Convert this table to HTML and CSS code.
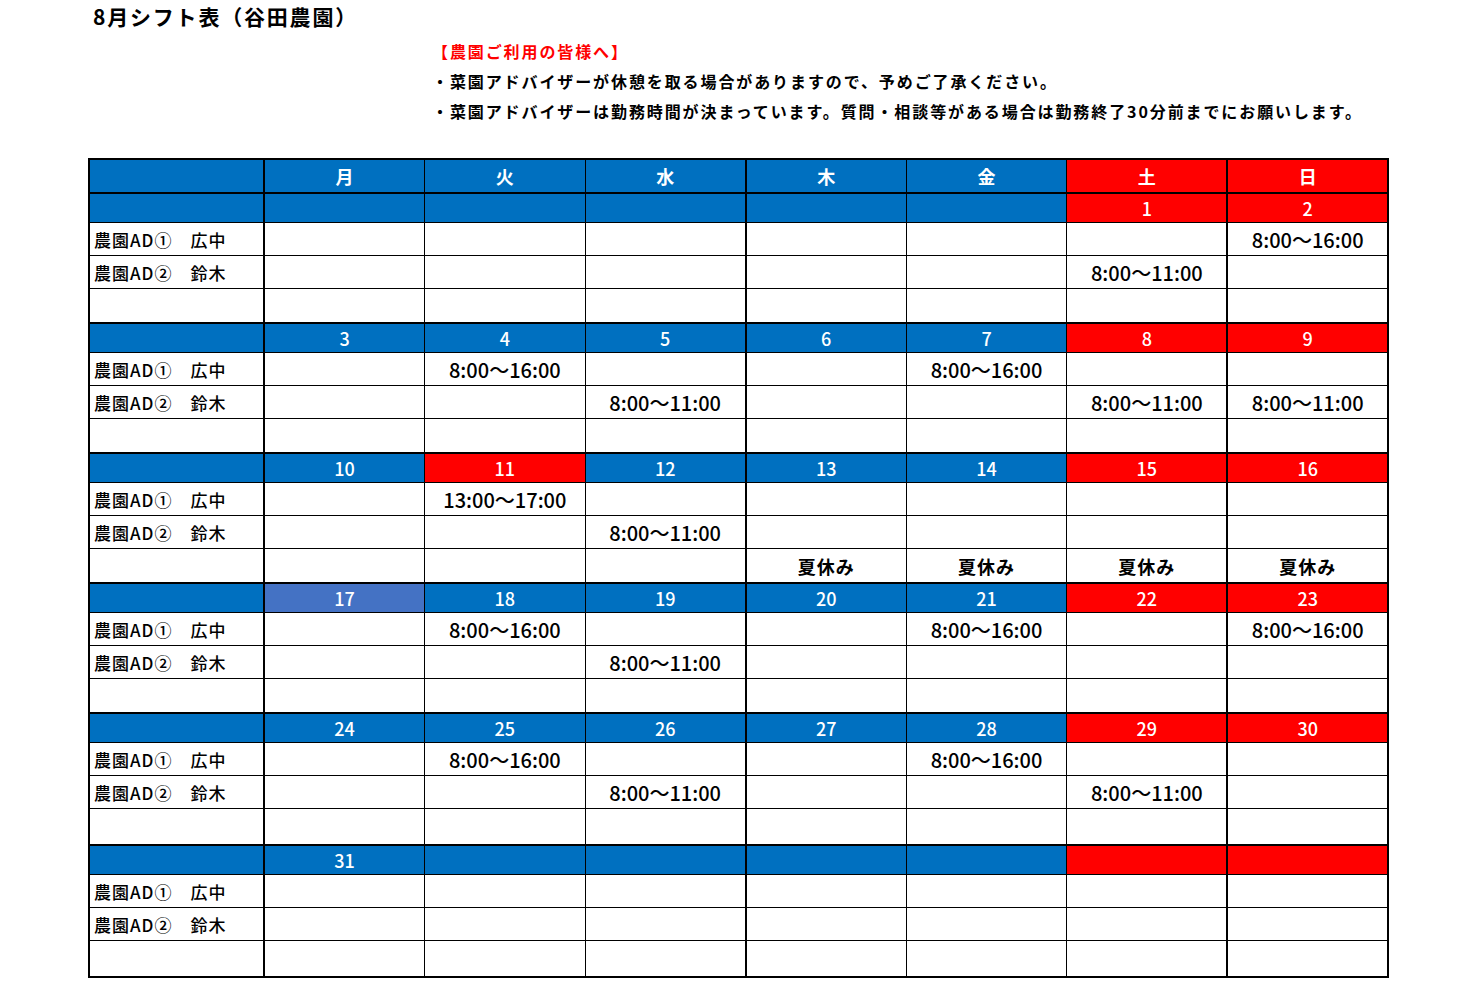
FILE: index.html
```html
<!DOCTYPE html>
<html lang="ja">
<head>
<meta charset="utf-8">
<title>8月シフト表（谷田農園）</title>
<link rel="stylesheet" href="styles.css">
</head>
<body>
<div class="page">
  <h1 class="title">8月シフト表（谷田農園）</h1>
  <div class="notice">
    <p class="notice-head">【農園ご利用の皆様へ】</p>
    <p class="notice-line">・菜園アドバイザーが休憩を取る場合がありますので、予めご了承ください。</p>
    <p class="notice-line">・菜園アドバイザーは勤務時間が決まっています。質問・相談等がある場合は勤務終了30分前までにお願いします。</p>
  </div>
  <table class="shift">
    <colgroup>
      <col class="c-label"><col><col><col><col><col><col><col>
    </colgroup>
    <tr class="wk">
      <td class="b"></td><td class="b">月</td><td class="b">火</td><td class="b">水</td><td class="b sep">木</td><td class="b">金</td><td class="r">土</td><td class="r sep">日</td>
    </tr>
    <tr class="dt">
      <td class="b"></td><td class="b"></td><td class="b"></td><td class="b"></td><td class="b sep"></td><td class="b"></td><td class="r">1</td><td class="r sep">2</td>
    </tr>
    <tr class="rw"><td class="lb">農園AD①　広中</td><td></td><td></td><td></td><td class="sep"></td><td></td><td></td><td class="sep">8:00～16:00</td></tr>
    <tr class="rw"><td class="lb">農園AD②　鈴木</td><td></td><td></td><td></td><td class="sep"></td><td></td><td>8:00～11:00</td><td class="sep"></td></tr>
    <tr class="rw last"><td class="lb"></td><td></td><td></td><td></td><td class="sep"></td><td></td><td></td><td class="sep"></td></tr>

    <tr class="dt">
      <td class="b"></td><td class="b">3</td><td class="b">4</td><td class="b">5</td><td class="b sep">6</td><td class="b">7</td><td class="r">8</td><td class="r sep">9</td>
    </tr>
    <tr class="rw"><td class="lb">農園AD①　広中</td><td></td><td>8:00～16:00</td><td></td><td class="sep"></td><td>8:00～16:00</td><td></td><td class="sep"></td></tr>
    <tr class="rw"><td class="lb">農園AD②　鈴木</td><td></td><td></td><td>8:00～11:00</td><td class="sep"></td><td></td><td>8:00～11:00</td><td class="sep">8:00～11:00</td></tr>
    <tr class="rw last"><td class="lb"></td><td></td><td></td><td></td><td class="sep"></td><td></td><td></td><td class="sep"></td></tr>

    <tr class="dt">
      <td class="b"></td><td class="b">10</td><td class="r">11</td><td class="b">12</td><td class="b sep">13</td><td class="b">14</td><td class="r">15</td><td class="r sep">16</td>
    </tr>
    <tr class="rw"><td class="lb">農園AD①　広中</td><td></td><td>13:00～17:00</td><td></td><td class="sep"></td><td></td><td></td><td class="sep"></td></tr>
    <tr class="rw"><td class="lb">農園AD②　鈴木</td><td></td><td></td><td>8:00～11:00</td><td class="sep"></td><td></td><td></td><td class="sep"></td></tr>
    <tr class="rw last"><td class="lb"></td><td></td><td></td><td></td><td class="sep hol">夏休み</td><td class="hol">夏休み</td><td class="hol">夏休み</td><td class="sep hol">夏休み</td></tr>

    <tr class="dt">
      <td class="b"></td><td class="lbblue">17</td><td class="b">18</td><td class="b">19</td><td class="b sep">20</td><td class="b">21</td><td class="r">22</td><td class="r sep">23</td>
    </tr>
    <tr class="rw"><td class="lb">農園AD①　広中</td><td></td><td>8:00～16:00</td><td></td><td class="sep"></td><td>8:00～16:00</td><td></td><td class="sep">8:00～16:00</td></tr>
    <tr class="rw"><td class="lb">農園AD②　鈴木</td><td></td><td></td><td>8:00～11:00</td><td class="sep"></td><td></td><td></td><td class="sep"></td></tr>
    <tr class="rw last"><td class="lb"></td><td></td><td></td><td></td><td class="sep"></td><td></td><td></td><td class="sep"></td></tr>

    <tr class="dt">
      <td class="b"></td><td class="b">24</td><td class="b">25</td><td class="b">26</td><td class="b sep">27</td><td class="b">28</td><td class="r">29</td><td class="r sep">30</td>
    </tr>
    <tr class="rw"><td class="lb">農園AD①　広中</td><td></td><td>8:00～16:00</td><td></td><td class="sep"></td><td>8:00～16:00</td><td></td><td class="sep"></td></tr>
    <tr class="rw"><td class="lb">農園AD②　鈴木</td><td></td><td></td><td>8:00～11:00</td><td class="sep"></td><td></td><td>8:00～11:00</td><td class="sep"></td></tr>
    <tr class="rw last tall"><td class="lb"></td><td></td><td></td><td></td><td class="sep"></td><td></td><td></td><td class="sep"></td></tr>

    <tr class="dt">
      <td class="b"></td><td class="b">31</td><td class="b"></td><td class="b"></td><td class="b sep"></td><td class="b"></td><td class="r"></td><td class="r sep"></td>
    </tr>
    <tr class="rw"><td class="lb">農園AD①　広中</td><td></td><td></td><td></td><td class="sep"></td><td></td><td></td><td class="sep"></td></tr>
    <tr class="rw"><td class="lb">農園AD②　鈴木</td><td></td><td></td><td></td><td class="sep"></td><td></td><td></td><td class="sep"></td></tr>
    <tr class="rw last tall"><td class="lb"></td><td></td><td></td><td></td><td class="sep"></td><td></td><td></td><td class="sep"></td></tr>
  </table>
</div>
</body>
</html>
```

FILE: styles.css
```css
html, body {
  margin: 0;
  padding: 0;
  background: #ffffff;
}

body {
  font-family: "Noto Sans CJK JP", "Noto Sans", sans-serif;
  color: #000000;
}

.page {
  padding: 0 0 0 88px;
  width: 1301px;
}

.title {
  margin: 0 0 0 5px;
  padding-top: 2px;
  font-size: 21px;
  line-height: 28px;
  font-weight: 700;
  letter-spacing: 1.8px;
  height: 30px;
}

.notice {
  margin-left: 344px;
  margin-top: 4px;
}

.notice p {
  margin: 0;
  font-size: 16px;
  line-height: 30px;
  font-weight: 700;
  letter-spacing: 1.9px;
}

.notice-head {
  color: #ff0000;
  letter-spacing: 0.6px;
  font-size: 16.5px;
}

.notice-line + .notice-line {
  margin-top: 0;
}

.shift {
  margin-top: 32px;
  border-collapse: collapse;
  table-layout: fixed;
  width: 1301px;
  border: 2px solid #000;
}

.c-label {
  width: 175px;
}

.shift td {
  border: 1px solid #000;
  padding: 0;
  text-align: center;
  vertical-align: middle;
  font-size: 20px;
  font-weight: 500;
  white-space: nowrap;
  overflow: hidden;
}

.shift td:first-child {
  border-right: 2px solid #000;
}

.shift td.sep {
  border-left: 2px solid #000;
}

.shift tr.wk td {
  height: 32px;
  font-size: 18px;
  font-weight: 700;
  color: #ffffff;
}

.shift tr.dt td {
  height: 28px;
  font-size: 18px;
  font-weight: 500;
  color: #ffffff;
  border-top: 2px solid #000;
}

.shift tr.rw td {
  height: 32px;
}

.shift tr.rw.last td {
  height: 33px;
}

.shift tr.rw.tall td {
  height: 35px;
}

.shift td.b {
  background: #0070c0;
}

.shift td.r {
  background: #ff0000;
}

.shift td.lbblue {
  background: #4472c4;
}

.shift td.lb {
  text-align: left;
  padding-left: 4px;
  font-size: 17px;
  font-weight: 500;
  letter-spacing: 1px;
}

.shift td.hol {
  font-size: 18px;
  font-weight: 700;
  letter-spacing: 1px;
}
```
